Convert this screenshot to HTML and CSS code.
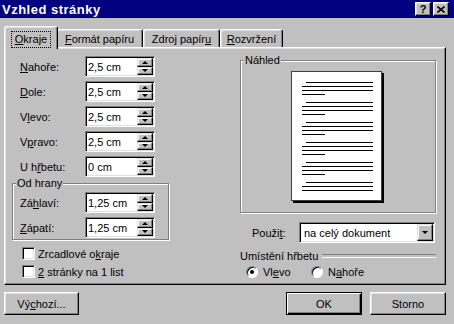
FILE: index.html
```html
<!DOCTYPE html>
<html lang="cs">
<head>
    <meta charset="UTF-8">
    <title>Vzhled stránky</title>
    <link rel="stylesheet" href="styles.css">
</head>
<body>

    <div class="titlebar">
        <span class="title">Vzhled stránky</span>
        <div class="caption-buttons">
            <span class="cap-btn">?</span>
            <span class="cap-btn">
                <svg width="8" height="7" viewBox="0 0 8 7"><path d="M0.5 0.5 L7.5 6.5 M7.5 0.5 L0.5 6.5" stroke="#000" stroke-width="1.6" fill="none"/></svg>
            </span>
        </div>
    </div>

    <div class="tabs">
        <div class="tab active" style="width:54px"><span class="focus"><u>O</u>kraje</span></div>
        <div class="tab" style="width:87px"><u>F</u>ormát papíru</div>
        <div class="tab" style="width:77px">Zdroj papír<u>u</u></div>
        <div class="tab" style="width:63px"><u>R</u>ozvržení</div>
    </div>

    <div class="panel">
        <div class="col-left">
            <div class="field"><label><u>N</u>ahoře:</label>
                <div class="spin"><span class="value">2,5 cm</span><span class="arrows"><span class="arrow up"></span><span class="arrow down"></span></span></div>
            </div>
            <div class="field"><label><u>D</u>ole:</label>
                <div class="spin"><span class="value">2,5 cm</span><span class="arrows"><span class="arrow up"></span><span class="arrow down"></span></span></div>
            </div>
            <div class="field"><label>V<u>l</u>evo:</label>
                <div class="spin"><span class="value">2,5 cm</span><span class="arrows"><span class="arrow up"></span><span class="arrow down"></span></span></div>
            </div>
            <div class="field"><label>V<u>p</u>ravo:</label>
                <div class="spin"><span class="value">2,5 cm</span><span class="arrows"><span class="arrow up"></span><span class="arrow down"></span></span></div>
            </div>
            <div class="field"><label>U h<u>ř</u>betu:</label>
                <div class="spin"><span class="value">0 cm</span><span class="arrows"><span class="arrow up"></span><span class="arrow down"></span></span></div>
            </div>

            <div class="group group-edge">
                <span class="group-title">Od hrany</span>
                <div class="field"><label>Zá<u>h</u>laví:</label>
                    <div class="spin"><span class="value">1,25 cm</span><span class="arrows"><span class="arrow up"></span><span class="arrow down"></span></span></div>
                </div>
                <div class="field"><label><u>Z</u>ápatí:</label>
                    <div class="spin"><span class="value">1,25 cm</span><span class="arrows"><span class="arrow up"></span><span class="arrow down"></span></span></div>
                </div>
            </div>

            <div class="check"><span class="box"></span><span>Zrcadlové o<u>k</u>raje</span></div>
            <div class="check"><span class="box"></span><span><u>2</u> stránky na 1 list</span></div>
        </div>

        <div class="col-right">
            <div class="group group-preview">
                <span class="group-title">Náhled</span>
                <div class="page">
                    <div class="para"><div class="ln indent"></div><div class="ln"></div><div class="ln"></div><div class="ln short"></div></div>
                    <div class="para"><div class="ln indent"></div><div class="ln"></div><div class="ln"></div><div class="ln short"></div></div>
                    <div class="para"><div class="ln indent"></div><div class="ln"></div><div class="ln"></div><div class="ln short"></div></div>
                    <div class="para"><div class="ln indent"></div><div class="ln"></div><div class="ln"></div><div class="ln short"></div></div>
                    <div class="para"><div class="ln indent"></div><div class="ln"></div><div class="ln"></div><div class="ln short"></div></div>
                    <div class="para"><div class="ln indent"></div><div class="ln"></div><div class="ln"></div></div>
                </div>
            </div>

            <div class="apply">
                <label>Použi<u>t</u>:</label>
                <div class="combo"><span class="value">na celý dokument</span><span class="drop"></span></div>
            </div>

            <div class="section-line">Umístění hřbetu</div>
            <div class="radios">
                <div class="radio-item"><span class="radio checked"></span><span>Vl<u>e</u>vo</span></div>
                <div class="radio-item"><span class="radio"></span><span>N<u>a</u>hoře</span></div>
            </div>
        </div>
    </div>

    <div class="footer">
        <button class="btn">Vý<u>c</u>hozí...</button>
        <button class="btn default">OK</button>
        <button class="btn">Storno</button>
    </div>

</body>
</html>
```

FILE: styles.css
```css
/* Dialog ve stylu Windows 95 */
* {
    box-sizing: border-box;
}
body {
    margin: 0;
    width: 454px;
    height: 324px;
    overflow: hidden;
    background: #c0c0c0;
    font-family: "Liberation Sans", Arial, sans-serif;
    font-size: 11px;
    color: #000;
}
u {
    text-underline-offset: 1px;
}

/* --- titulek okna --- */
.titlebar {
    height: 18px;
    background: #000080;
    display: flex;
    align-items: center;
    padding: 0 5px 0 2px;
}
.title {
    flex: 1;
    color: #fff;
    font-weight: bold;
    font-size: 13px;
    letter-spacing: 0.5px;
}
.caption-buttons {
    display: flex;
    gap: 2px;
}
.cap-btn {
    width: 16px;
    height: 14px;
    display: flex;
    align-items: center;
    justify-content: center;
    font-weight: bold;
    font-size: 11px;
    line-height: 1;
    background: #c0c0c0;
    border: 1px solid;
    border-color: #fff #000 #000 #fff;
    box-shadow: inset -1px -1px #808080, inset 1px 1px #dfdfdf;
}

/* --- záložky --- */
.tabs {
    display: flex;
    align-items: flex-end;
    height: 21px;
    margin-top: 8px;
    padding-left: 6px;
    position: relative;
    z-index: 1;
}
.tab {
    height: 18px;
    padding-top: 3px;
    text-align: center;
    line-height: 13px;
    white-space: nowrap;
    background: #c0c0c0;
    border-top: 1px solid #fff;
    border-left: 1px solid #fff;
    border-right: 1px solid #000;
    border-radius: 3px 3px 0 0;
    box-shadow: inset -1px 0 #808080, inset 1px 1px #dfdfdf;
}
.tab.active {
    height: 23px;
    margin: 0 -2px -2px;
    padding-top: 4px;
    position: relative;
    z-index: 2;
}
.focus {
    display: inline-block;
    padding: 1px 3px;
    border: 1px dotted #000;
}

/* --- panel --- */
.panel {
    display: flex;
    height: 238px;
    margin: 0 8px 0 4px;
    border: 1px solid;
    border-color: #fff #000 #000 #fff;
    box-shadow: inset -1px -1px #808080, inset 1px 1px #dfdfdf;
}
.col-left {
    width: 235px;
    padding-top: 8px;
}
.col-right {
    width: 196px;
    padding-top: 12px;
}

.field {
    display: flex;
    align-items: center;
    height: 21px;
    margin-left: 15px;
}
.field + .field {
    margin-top: 4px;
}
.field label {
    width: 65px;
}

/* pole se šipkami */
.spin, .combo {
    display: flex;
    height: 21px;
    padding: 2px;
    background: #fff;
    border: 1px solid;
    border-color: #808080 #fff #fff #808080;
    box-shadow: inset 1px 1px #000, inset -1px -1px #dfdfdf;
}
.spin {
    width: 70px;
}
.value {
    flex: 1;
    line-height: 17px;
    white-space: nowrap;
}
.arrows {
    width: 16px;
    display: flex;
    flex-direction: column;
    margin: -1px -1px -1px 0;
}
.arrow, .drop {
    display: flex;
    align-items: center;
    justify-content: center;
    background: #c0c0c0;
    border: 1px solid;
    border-color: #dfdfdf #000 #000 #dfdfdf;
    box-shadow: inset -1px -1px #808080, inset 1px 1px #fff;
}
.arrow {
    flex: 1;
}
.arrow::after, .drop::after {
    content: "";
    border-left: 3px solid transparent;
    border-right: 3px solid transparent;
}
.arrow.up::after {
    border-bottom: 3px solid #000;
}
.arrow.down::after, .drop::after {
    border-top: 3px solid #000;
}

/* rámečky skupin */
.group {
    border: 1px solid #808080;
    box-shadow: inset 1px 1px #fff, 1px 1px #fff;
}
.group-title {
    display: table;
    margin: -7px 0 0 3px;
    padding: 0 1px;
    line-height: 13px;
    background: #c0c0c0;
}
.group-edge {
    width: 157px;
    margin: 6px 0 0 7px;
    padding-bottom: 1px;
}
.group-edge .group-title {
    margin-bottom: 2px;
}
.group-edge .field {
    margin-left: 7px;
}

.check {
    display: flex;
    align-items: center;
    height: 13px;
    margin: 7px 0 0 17px;
}
.check + .check {
    margin-top: 5px;
}
.box {
    width: 13px;
    height: 13px;
    margin-right: 3px;
    background: #fff;
    border: 1px solid;
    border-color: #808080 #fff #fff #808080;
    box-shadow: inset 1px 1px #000, inset -1px -1px #dfdfdf;
}

/* náhled stránky */
.group-preview {
    height: 153px;
}
.page {
    width: 91px;
    height: 130px;
    margin: 4px 0 0 50px;
    padding: 10px 0 0 10px;
    background: #fff;
    border: 1px solid #404040;
    box-shadow: 2px 2px 0 #000;
}
.para + .para {
    margin-top: 7px;
}
.ln {
    width: 71px;
    height: 1px;
    background: #000;
}
.ln + .ln {
    margin-top: 3px;
}
.ln.indent {
    width: 67px;
    margin-left: 4px;
}
.ln.short {
    width: 23px;
}

.apply {
    display: flex;
    align-items: center;
    margin-top: 9px;
    padding-left: 12px;
}
.apply label {
    width: 47px;
}
.combo {
    width: 136px;
}
.combo .value {
    padding-left: 2px;
}
.drop {
    width: 16px;
    margin: -1px -1px -1px 0;
}

.section-line {
    display: flex;
    align-items: center;
    height: 13px;
    margin-top: 6px;
}
.section-line::after {
    content: "";
    flex: 1;
    height: 2px;
    margin-left: 4px;
    border-top: 1px solid #808080;
    border-bottom: 1px solid #fff;
}

.radios {
    display: flex;
    height: 13px;
    margin-top: 3px;
    padding-left: 6px;
}
.radio-item {
    display: flex;
    align-items: center;
}
.radio-item:first-child {
    width: 65px;
}
.radio {
    width: 12px;
    height: 12px;
    margin-right: 5px;
    display: flex;
    align-items: center;
    justify-content: center;
    border-radius: 50%;
    background: #fff;
    border: 1px solid;
    border-color: #808080 #fff #fff #808080;
    box-shadow: inset 1px 1px #000;
}
.radio.checked::after {
    content: "";
    width: 4px;
    height: 4px;
    border-radius: 50%;
    background: #000;
}

/* --- tlačítka --- */
.footer {
    display: flex;
    gap: 8px;
    margin-top: 7px;
    padding: 0 8px 0 4px;
}
.btn {
    width: 76px;
    height: 23px;
    padding: 0;
    font-family: inherit;
    font-size: 11px;
    color: #000;
    background: #c0c0c0;
    border: 1px solid;
    border-color: #fff #000 #000 #fff;
    box-shadow: inset -1px -1px #808080, inset 1px 1px #dfdfdf;
}
.btn:first-child {
    width: 75px;
    margin-right: auto;
}
.btn.default {
    border-color: #000;
    box-shadow: inset 1px 1px #fff, inset -1px -1px #000, inset -2px -2px #808080;
}
```
